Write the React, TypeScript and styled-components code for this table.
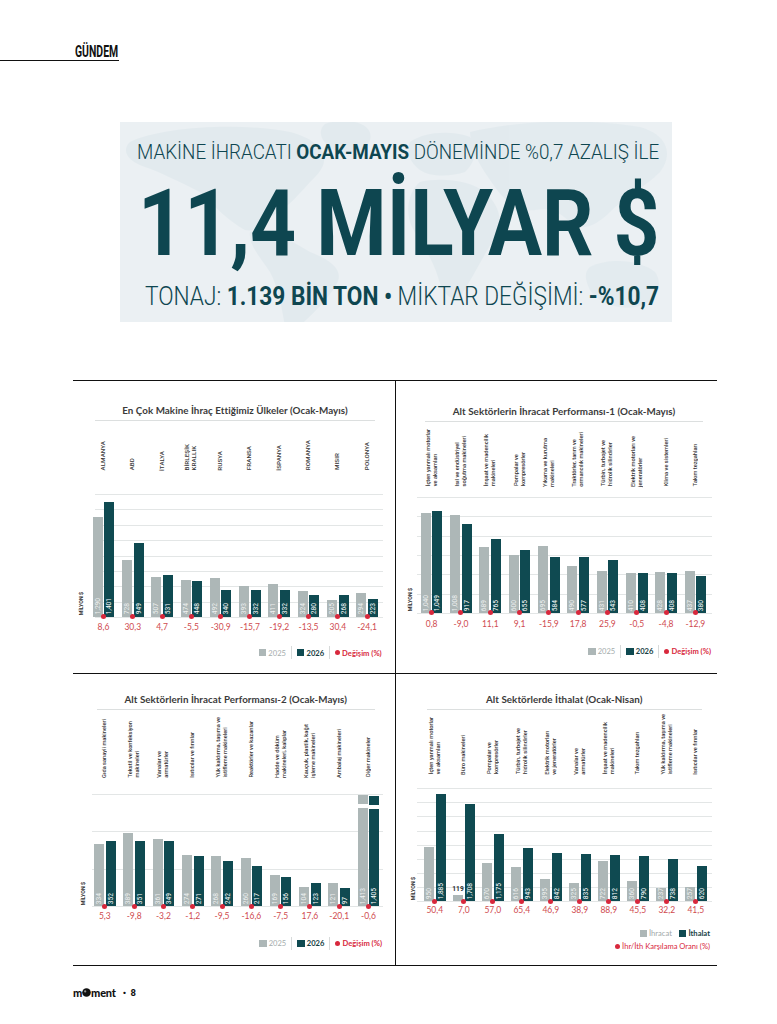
import React, { useLayoutEffect, useRef, useState } from 'react'
import styled, { createGlobalStyle } from 'styled-components'

const TEAL = '#0f4a51'
const GREY = '#adb7b7'
const RED = '#d8283c'
const NOTE = '#cf4b4f'
const INK = '#0e4650'

const GlobalStyle = createGlobalStyle`
  html, body { margin: 0; padding: 0; background: #fff; }
  body { font-family: 'Open Sans', 'Noto Sans', sans-serif; color: #222; }
  * { box-sizing: border-box; }
`

const Page = styled.div`
  width: 777px;
  min-height: 1024px;
  overflow: hidden;
`

/* ---------- squeeze text to a measured width ---------- */

const FitBox = styled.span<{ $w: number }>`
  display: block;
  width: ${p => p.$w}px;
  white-space: nowrap;
`

const FitInner = styled.span`
  display: inline-block;
  transform-origin: 0 50%;
`

function Fit({ width, children }: { width: number; children: React.ReactNode }) {
  const ref = useRef<HTMLSpanElement>(null)
  const [k, setK] = useState(1)
  useLayoutEffect(() => {
    const measure = () => {
      const el = ref.current
      if (el && el.offsetWidth) setK(width / el.offsetWidth)
    }
    measure()
    document.fonts?.ready.then(measure)
  }, [width])
  return (
    <FitBox $w={width}>
      <FitInner ref={ref} style={{ transform: `scaleX(${k})` }}>{children}</FitInner>
    </FitBox>
  )
}

/* ---------- header ---------- */

const Masthead = styled.header`
  width: 119px;
  padding-top: 43px;
  border-bottom: 1.5px solid #111;
  display: flex;
  justify-content: flex-end;
  padding-right: 1px;
`

const SectionName = styled.div`
  font-family: Roboto, 'Liberation Sans', sans-serif;
  font-weight: 700;
  font-size: 17px;
  line-height: 17px;
  color: #111;
`

/* ---------- banner ---------- */

const Banner = styled.section`
  position: relative;
  margin: 60.5px 0 0 120px;
  width: 552px;
  height: 200px;
  padding-top: 20.3px;
  background: #ebf0f3;
  overflow: hidden;
  display: flex;
  flex-direction: column;
  color: ${INK};
  font-family: Roboto, 'Open Sans', sans-serif;
`

const MapArt = styled.svg`
  position: absolute;
  inset: 0;
  width: 100%;
  height: 100%;
  z-index: 0;
`

const Kicker = styled.div`
  position: relative;
  margin-left: 17px;
  font-size: 21px;
  line-height: 21px;
  font-weight: 300;
  b { font-weight: 700; }
`

const Headline = styled.div`
  position: relative;
  margin: 15.3px 0 0 18px;
  font-size: 92px;
  line-height: 92px;
  font-weight: 700;
`

const Subline = styled.div`
  position: relative;
  margin: 12.5px 0 0 25px;
  font-size: 26px;
  line-height: 26px;
  font-weight: 300;
  b { font-weight: 700; }
`

/* ---------- board of charts ---------- */

const Board = styled.div`
  margin: 58px 0 0 73px;
  width: 644px;
  display: grid;
  grid-template-columns: 323px 321px;
  grid-template-rows: 293px 291px;
  border-top: 1px solid #111;
  border-bottom: 1px solid #111;
`

const Panel = styled.div<{ $left: boolean; $top: boolean }>`
  border-right: ${p => (p.$left ? '1px solid #111' : 'none')};
  border-bottom: ${p => (p.$top ? '1px solid #111' : 'none')};
  display: flex;
  flex-direction: column;
  font-family: Lato, 'Open Sans', sans-serif;
`

const TitleRule = styled.div<{ $top: number; $left: number; $w: number }>`
  margin: ${p => p.$top}px 0 0 ${p => p.$left}px;
  width: ${p => p.$w}px;
  padding-bottom: 4px;
  border-bottom: 1px solid #dcdfdf;
  text-align: center;
  font-size: 9.8px;
  line-height: 12px;
  font-weight: 700;
  color: #3b3b3b;
  letter-spacing: 0.05px;
  white-space: nowrap;
`

const Columns = styled.div<{ $left: number; $h?: number; $top?: number }>`
  display: flex;
  align-items: flex-end;
  margin: ${p => p.$top ?? 0}px 0 0 ${p => p.$left}px;
  height: ${p => (p.$h ? `${p.$h}px` : 'auto')};
`

const Cell = styled.div<{ $w: number }>`
  width: ${p => p.$w}px;
  flex: none;
  display: flex;
  justify-content: center;
`

const CatLabel = styled.div<{ $caps: boolean }>`
  writing-mode: vertical-rl;
  transform: rotate(180deg);
  white-space: pre;
  font-family: Roboto, 'Liberation Sans', sans-serif;
  font-size: ${p => (p.$caps ? '6.2px' : '5.7px')};
  font-weight: 500;
  line-height: 7px;
  letter-spacing: ${p => (p.$caps ? '0.1px' : '0')};
  color: #333;
`

const Note = styled.div<{ $w: number }>`
  width: ${p => p.$w}px;
  flex: none;
  text-align: center;
  font-size: 8.5px;
  line-height: 10px;
  color: ${NOTE};
`

const Plot = styled.div<{ $top: number; $left: number; $h: number; $gl: number; $gw: number; $step: number }>`
  position: relative;
  z-index: 0;
  display: flex;
  align-items: flex-end;
  margin: ${p => p.$top}px 0 0 ${p => p.$left}px;
  height: ${p => p.$h}px;
  &::before {
    content: '';
    position: absolute;
    z-index: -1;
    top: 0;
    left: ${p => p.$gl}px;
    width: ${p => p.$gw}px;
    height: ${p => p.$h + 1}px;
    background: repeating-linear-gradient(
      to bottom,
      #e3e6e6 0,
      #e3e6e6 1px,
      transparent 1px,
      transparent ${p => p.$step}px
    );
  }
`

const AxisNote = styled.div`
  position: absolute;
  left: -9.5px;
  bottom: 1px;
  writing-mode: vertical-rl;
  transform: rotate(180deg);
  font-family: Roboto, 'Liberation Sans', sans-serif;
  font-size: 5.3px;
  line-height: 5.5px;
  font-weight: 700;
  color: #333;
  white-space: nowrap;
`

const Group = styled.div<{ $w: number }>`
  position: relative;
  width: ${p => p.$w}px;
  height: 100%;
  flex: none;
  display: flex;
  justify-content: center;
  align-items: flex-end;
  gap: 1.6px;
`

const BarStack = styled.div`
  width: 10px;
  display: flex;
  flex-direction: column;
  align-items: center;
`

const BarBody = styled.div<{ $h: number; $c: string }>`
  width: 10px;
  height: ${p => p.$h}px;
  background: ${p => p.$c};
  display: flex;
  flex-direction: column;
  justify-content: flex-end;
  align-items: center;
  overflow: hidden;
`

const BarGap = styled.div`
  width: 10px;
  height: 4px;
  background: #fff;
`

const BarValue = styled.span<{ $soft: boolean }>`
  writing-mode: vertical-rl;
  transform: rotate(180deg);
  margin-bottom: 2px;
  font-family: Roboto, 'Liberation Sans', sans-serif;
  font-size: 6.6px;
  line-height: 8px;
  white-space: nowrap;
  color: ${p => (p.$soft ? 'rgba(255,255,255,0.82)' : '#fff')};
`

const OutValue = styled.span`
  margin-bottom: 2px;
  font-family: Roboto, 'Liberation Sans', sans-serif;
  font-size: 6.6px;
  line-height: 7px;
  font-weight: 700;
  color: #1e2b2d;
`

const Dot = styled.span`
  position: absolute;
  left: 50%;
  bottom: -2.5px;
  width: 5px;
  height: 5px;
  margin-left: -2.5px;
  border-radius: 50%;
  background: ${RED};
`

const LegendRow = styled.div<{ $top: number; $right: number }>`
  display: flex;
  justify-content: flex-end;
  align-items: center;
  margin-top: ${p => p.$top}px;
  padding-right: ${p => p.$right}px;
  height: 12px;
  font-size: 7.6px;
`

const Swatch = styled.span<{ $c: string; $gap?: number }>`
  width: 7.5px;
  height: 7px;
  background: ${p => p.$c};
  margin-right: 2px;
  margin-left: ${p => p.$gap ?? 0}px;
`

const LegendText = styled.span<{ $c: string; $bold?: boolean }>`
  color: ${p => p.$c};
  font-weight: ${p => (p.$bold ? 700 : 400)};
  line-height: 12px;
`

const LegendSep = styled.span`
  width: 1px;
  height: 13px;
  background: #d7dada;
  margin: 0 5px;
`

const LegendDot = styled.span`
  width: 5px;
  height: 5px;
  border-radius: 50%;
  background: ${RED};
  margin-right: 2px;
`

/* ---------- footer ---------- */

const Footer = styled.footer`
  margin: 21px 0 0 73px;
  display: flex;
  align-items: center;
  height: 12px;
  font-family: Roboto, 'Liberation Sans', sans-serif;
  font-weight: 700;
  color: #111;
`

const Brand = styled.span`
  display: flex;
  align-items: center;
  font-family: Lato, Roboto, sans-serif;
  font-weight: 900;
  font-size: 11px;
  letter-spacing: -0.2px;
`

const Folio = styled.span`
  margin-left: 7px;
  font-size: 9.5px;
  word-spacing: 2px;
`

/* ---------- data ---------- */

type Row = { a: string; b: string; ha: number; hb: number; note: string; cap?: number; aOut?: boolean }

type Geo = {
  titleTop: number
  titleLeft: number
  titleW: number
  labelsH: number
  groupsLeft: number
  pitch: number
  plotTop: number
  plotH: number
  intervals: number
  gridLeft: number
  gridW: number
  notesTop: number
  legendTop: number
  legendRight: number
}

type ChartCfg = {
  title: string
  caps: boolean
  labels: string[]
  rows: Row[]
  legend: 'years' | 'trade'
  geo: Geo
}

const r = (a: string, b: string, ha: number, hb: number, note: string, extra: Partial<Row> = {}): Row => ({
  a, b, ha, hb, note, ...extra,
})

const charts: ChartCfg[] = [
  {
    title: 'En Çok Makine İhraç Ettiğimiz Ülkeler (Ocak-Mayıs)',
    caps: true,
    labels: ['ALMANYA', 'ABD', 'İTALYA', 'BİRLEŞİK\nKRALLIK', 'RUSYA', 'FRANSA', 'İSPANYA', 'ROMANYA', 'MISIR', 'POLONYA'],
    rows: [
      r('1,290', '1,401', 99.7, 114.7, '8,6'),
      r('728', '949', 56.7, 73.3, '30,3'),
      r('507', '531', 39.3, 41.7, '4,7'),
      r('474', '448', 37, 35.3, '-5,5'),
      r('492', '340', 38.7, 27, '-30,9'),
      r('393', '332', 31, 26.7, '-15,7'),
      r('411', '332', 32.3, 26.7, '-19,2'),
      r('324', '280', 25.3, 22, '-13,5'),
      r('205', '268', 17, 21.3, '30,4'),
      r('294', '223', 23.3, 18, '-24,1'),
    ],
    legend: 'years',
    geo: {
      titleTop: 23, titleLeft: 22, titleW: 280, labelsH: 50, groupsLeft: 15.8, pitch: 29.3,
      plotTop: 23, plotH: 123, intervals: 8, gridLeft: 6.2, gridW: 288, notesTop: 5, legendTop: 15, legendRight: 13.3,
    },
  },
  {
    title: 'Alt Sektörlerin İhracat Performansı-1 (Ocak-Mayıs)',
    caps: false,
    labels: [
      'İçten yanmalı motorlar\nve aksamları',
      'Isıl ve endüstriyel\nsoğutma makineleri',
      'İnşaat ve madencilik\nmakineleri',
      'Pompalar ve\nkompresörler',
      'Yıkama ve kurutma\nmakineleri',
      'Traktörler, tarım ve\normancılık makineleri',
      'Türbin, turbojet ve\nhidrolik silindirler',
      'Elektrik motorları ve\njeneratörler',
      'Klima ve sistemleri',
      'Takım tezgahları',
    ],
    rows: [
      r('1,040', '1,049', 100.3, 101.7, '0,8'),
      r('1,008', '917', 97.7, 89, '-9,0'),
      r('689', '765', 66.3, 74, '11,1'),
      r('600', '655', 58, 63.3, '9,1'),
      r('695', '584', 67.3, 56.3, '-15,9'),
      r('490', '577', 47, 55.7, '17,8'),
      r('431', '543', 41.7, 52.7, '25,9'),
      r('410', '408', 39.7, 39.7, '-0,5'),
      r('428', '408', 41.3, 39.7, '-4,8'),
      r('437', '380', 42.3, 37, '-12,9'),
    ],
    legend: 'years',
    geo: {
      titleTop: 24, titleLeft: 29, titleW: 278, labelsH: 65, groupsLeft: 21, pitch: 29.3,
      plotTop: 10.3, plotH: 116, intervals: 6, gridLeft: -0.3, gridW: 295, notesTop: 6.7, legendTop: 16, legendRight: 6,
    },
  },
  {
    title: 'Alt Sektörlerin İhracat Performansı-2 (Ocak-Mayıs)',
    caps: false,
    labels: [
      'Gıda sanayii makineleri',
      'Tekstil ve konfeksiyon\nmakineleri',
      'Vanalar ve\narmatürler',
      'Isıtıcılar ve fırınlar',
      'Yük kaldırma, taşıma ve\nistifleme makineleri',
      'Reaktörler ve kazanlar',
      'Hadde ve döküm\nmakineleri, kalıplar',
      'Kauçuk, plastik, kağıt\nişleme makineleri',
      'Ambalaj makineleri',
      'Diğer makineler',
    ],
    rows: [
      r('334', '352', 62.3, 65.3, '5,3'),
      r('389', '351', 72.7, 65.3, '-9,8'),
      r('361', '349', 67, 65, '-3,2'),
      r('274', '271', 50.7, 50.3, '-1,2'),
      r('268', '242', 49.7, 44.7, '-9,5'),
      r('260', '217', 48.3, 40.3, '-16,6'),
      r('169', '156', 31.3, 29.3, '-7,5'),
      r('104', '123', 19.3, 23, '17,6'),
      r('121', '97', 22.7, 18.3, '-20,1'),
      r('1,413', '1,405', 97.7, 96.7, '-0,6', { cap: 9.3 }),
    ],
    legend: 'years',
    geo: {
      titleTop: 19.3, titleLeft: 23.7, titleW: 278, labelsH: 67.7, groupsLeft: 17.2, pitch: 29.3,
      plotTop: 16.5, plotH: 112.2, intervals: 3, gridLeft: 1.8, gridW: 291, notesTop: 5, legendTop: 16.3, legendRight: 13,
    },
  },
  {
    title: 'Alt Sektörlerde İthalat (Ocak-Nisan)',
    caps: false,
    labels: [
      'İçten yanmalı motorlar\nve aksamları',
      'Büro makineleri',
      'Pompalar ve\nkompresörler',
      'Türbin, turbojet ve\nhidrolik silindirler',
      'Elektrik motorları\nve jeneratörler',
      'Vanalar ve\narmatürler',
      'İnşaat ve madencilik\nmakineleri',
      'Takım tezgahları',
      'Yük kaldırma, taşıma ve\nistifleme makineleri',
      'Isıtıcılar ve fırınlar',
    ],
    rows: [
      r('950', '1,885', 54, 107.4, '50,4'),
      r('119', '1,708', 6.7, 97.4, '7,0', { aOut: true }),
      r('670', '1,175', 38, 67, '57,0'),
      r('616', '943', 34.7, 53.7, '65,4'),
      r('395', '842', 22.7, 48, '46,9'),
      r('325', '835', 18.4, 47.4, '38,9'),
      r('722', '812', 40.7, 46, '88,9'),
      r('360', '790', 20.7, 45, '45,5'),
      r('237', '738', 13.7, 42.4, '32,2'),
      r('257', '620', 14.7, 35, '41,5'),
    ],
    legend: 'trade',
    geo: {
      titleTop: 19, titleLeft: 30.7, titleW: 275, labelsH: 65, groupsLeft: 24.3, pitch: 29,
      plotTop: 13.3, plotH: 113.4, intervals: 8, gridLeft: -3.6, gridW: 295, notesTop: 4.3, legendTop: 12, legendRight: 7,
    },
  },
]

/* ---------- chart parts ---------- */

function Bar({ value, h, color, soft, cap, outside }: {
  value: string; h: number; color: string; soft: boolean; cap?: number; outside?: boolean
}) {
  return (
    <BarStack>
      {outside && <OutValue>{value}</OutValue>}
      {cap && (
        <>
          <BarBody $h={cap} $c={color} />
          <BarGap />
        </>
      )}
      <BarBody $h={h} $c={color}>
        {!outside && <BarValue $soft={soft}>{value}</BarValue>}
      </BarBody>
    </BarStack>
  )
}

function Legend({ kind, top, right }: { kind: 'years' | 'trade'; top: number; right: number }) {
  if (kind === 'trade') {
    return (
      <>
        <LegendRow $top={top} $right={right}>
          <Swatch $c={GREY} />
          <LegendText $c="#9fa8a8">İhracat</LegendText>
          <Swatch $c={TEAL} $gap={7} />
          <LegendText $c="#163d43" $bold>İthalat</LegendText>
        </LegendRow>
        <LegendRow $top={0.7} $right={right}>
          <LegendDot />
          <LegendText $c={RED}>İhr/İth Karşılama Oranı (%)</LegendText>
        </LegendRow>
      </>
    )
  }
  return (
    <LegendRow $top={top} $right={right}>
      <Swatch $c={GREY} />
      <LegendText $c="#a4acac">2025</LegendText>
      <LegendSep />
      <Swatch $c={TEAL} />
      <LegendText $c="#163d43" $bold>2026</LegendText>
      <LegendSep />
      <LegendDot />
      <LegendText $c={RED} $bold>Değişim (%)</LegendText>
    </LegendRow>
  )
}

function Chart({ cfg }: { cfg: ChartCfg }) {
  const g = cfg.geo
  return (
    <>
      <TitleRule $top={g.titleTop} $left={g.titleLeft} $w={g.titleW}>{cfg.title}</TitleRule>
      <Columns $left={g.groupsLeft} $h={g.labelsH}>
        {cfg.labels.map(l => (
          <Cell key={l} $w={g.pitch}>
            <CatLabel $caps={cfg.caps}>{l}</CatLabel>
          </Cell>
        ))}
      </Columns>
      <Plot
        $top={g.plotTop}
        $left={g.groupsLeft}
        $h={g.plotH}
        $gl={g.gridLeft}
        $gw={g.gridW}
        $step={g.plotH / g.intervals}
      >
        <AxisNote>MİLYON $</AxisNote>
        {cfg.rows.map((row, i) => (
          <Group key={i} $w={g.pitch}>
            <Bar value={row.a} h={row.ha} color={GREY} soft cap={row.cap} outside={row.aOut} />
            <Bar value={row.b} h={row.hb} color={TEAL} soft={false} cap={row.cap} />
            <Dot />
          </Group>
        ))}
      </Plot>
      <Columns $left={g.groupsLeft} $top={g.notesTop}>
        {cfg.rows.map((row, i) => (
          <Note key={i} $w={g.pitch}>{row.note}</Note>
        ))}
      </Columns>
      <Legend kind={cfg.legend} top={g.legendTop} right={g.legendRight} />
    </>
  )
}

export default function App() {
  return (
    <Page>
      <GlobalStyle />
      <Masthead>
        <SectionName>
          <Fit width={43}>GÜNDEM</Fit>
        </SectionName>
      </Masthead>

      <Banner>
        <MapArt viewBox="0 0 552 200" preserveAspectRatio="none" aria-hidden>
          <g fill="#dde7ec" opacity="0.6">
            <path d="M10 20 C40 5 120 0 170 10 C200 18 215 35 195 55 C180 70 170 85 150 95 C140 105 135 110 125 108 C110 100 95 85 80 70 C60 60 40 50 25 45 C10 40 0 30 10 20Z" />
            <path d="M205 2 C225 -5 255 0 250 18 C245 32 220 35 210 25 C200 18 198 8 205 2Z" />
            <path d="M130 110 C150 105 170 118 190 130 C215 140 225 150 215 165 C205 180 190 195 178 205 L165 205 C162 185 158 165 150 150 C140 135 128 122 130 110Z" />
            <path d="M290 20 C305 10 330 8 350 15 C360 25 355 40 345 50 C330 55 310 55 300 48 C290 40 285 30 290 20Z" />
            <path d="M300 60 C320 55 350 58 365 70 C380 85 385 100 372 120 C360 140 350 160 340 175 C330 180 322 170 318 155 C312 135 300 120 292 105 C285 90 288 70 300 60Z" />
            <path d="M350 10 C390 0 460 -5 520 5 C545 12 555 30 540 50 C525 65 505 75 490 90 C475 105 460 110 450 100 C440 90 430 85 415 88 C400 90 385 80 375 65 C365 50 352 35 350 10Z" />
            <path d="M470 145 C490 135 520 138 535 150 C545 165 535 182 515 185 C495 188 478 180 470 168 C465 158 464 150 470 145Z" />
          </g>
        </MapArt>
        <Kicker>
          <Fit width={522}>
            MAKİNE İHRACATI <b>OCAK-MAYIS</b> DÖNEMİNDE %0,7 AZALIŞ İLE
          </Fit>
        </Kicker>
        <Headline>
          <Fit width={522}>11,4 MİLYAR $</Fit>
        </Headline>
        <Subline>
          <Fit width={514}>
            TONAJ: <b>1.139 BİN TON</b> <b>•</b> MİKTAR DEĞİŞİMİ: <b>-%10,7</b>
          </Fit>
        </Subline>
      </Banner>

      <Board>
        {charts.map((c, i) => (
          <Panel key={c.title} $left={i % 2 === 0} $top={i < 2}>
            <Chart cfg={c} />
          </Panel>
        ))}
      </Board>

      <Footer>
        <Brand>
          m
          <svg width="9" height="9" viewBox="0 0 9 9" aria-hidden>
            <circle cx="4.5" cy="4.5" r="4.3" fill="#111" />
            <circle cx="3.2" cy="3.4" r="1.1" fill="#fff" opacity="0.55" />
          </svg>
          ment
        </Brand>
        <Folio>• 8</Folio>
      </Footer>
    </Page>
  )
}
